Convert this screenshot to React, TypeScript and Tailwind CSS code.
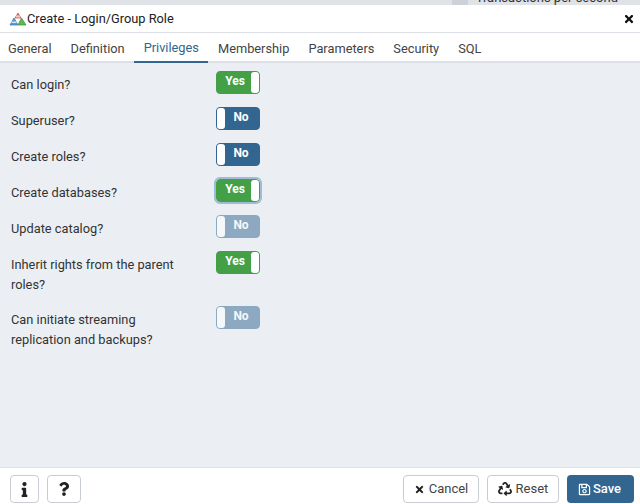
import { FaInfo, FaQuestion, FaRecycle, FaRegSave, FaTimes } from "react-icons/fa";

const tabs = ["General", "Definition", "Privileges", "Membership", "Parameters", "Security", "SQL"];

const rows = [
  { label: "Can login?", on: true },
  { label: "Superuser?", on: false },
  { label: "Create roles?", on: false },
  { label: "Create databases?", on: true, focus: true },
  { label: "Update catalog?", on: false, disabled: true },
  { label: "Inherit rights from the parent roles?", on: true, tall: true },
  { label: "Can initiate streaming replication and backups?", on: false, disabled: true, tall: true },
];

function Toggle({ on, disabled, focus }: { on: boolean; disabled?: boolean; focus?: boolean }) {
  const color = on ? "bg-[#43a047] border-[#43a047]" : "bg-[#326690] border-[#326690]";
  return (
    <div
      className={`flex h-[23px] w-[44px] items-center justify-between rounded border ${color} ${
        disabled ? "opacity-50" : ""
      } ${focus ? "outline-2 outline-[#9fbbd6]" : ""}`}
    >
      {!on && <span className="h-[21px] w-2 rounded-[3px] bg-white" />}
      <span className={`flex-1 pb-[3px] text-center text-xs font-bold text-white ${on ? "pl-[2px]" : "pr-[2px]"}`}>
        {on ? "Yes" : "No"}
      </span>
      {on && <span className="h-[21px] w-2 rounded-[3px] bg-white" />}
    </div>
  );
}

function Logo() {
  return (
    <svg width="18" height="14" viewBox="0 0 18 14">
      <path d="M9 1 L12 6 L6 6 Z" fill="#e57373" stroke="#c75b5b" strokeWidth="0.8" />
      <rect x="7" y="3.5" width="4" height="2" fill="#f4c7c3" />
      <path d="M5 6 L9 13 L1 13 Z" fill="#5c9bd1" stroke="#3f7fb5" strokeWidth="0.8" />
      <path d="M12.5 6 L17 13 L9 13 Z" fill="#5cb85c" stroke="#3d9a3d" strokeWidth="0.8" />
      <rect x="2.5" y="9.5" width="5" height="1.5" fill="#cfe3f5" />
    </svg>
  );
}

export default function App() {
  return (
    <div className="flex h-[504px] w-[640px] flex-col overflow-hidden bg-white font-['Roboto',sans-serif] text-[#222]">
      <div className="flex h-[5px] justify-end overflow-hidden bg-[#dfe2e7] pr-[22px]">
        <span className="mr-[8px] h-[5px] w-[16px] bg-[#cdd1d8]" />
        <span className="-mt-[12px] text-[13px] leading-5 text-[#333]">Transactions per second</span>
      </div>

      <div className="flex h-[28px] items-center justify-between border-b border-[#dde0e6] pl-[9px] pr-[5px]">
        <div className="flex items-center gap-0">
          <Logo />
          <span className="text-[12.8px] text-[#222]">Create - Login/Group Role</span>
        </div>
        <FaTimes className="size-[12px] text-[#111]" />
      </div>

      <div className="flex h-[30px] border-b-2 border-[#dde0e6] text-[#444]">
        {tabs.map((t, i) => (
          <div
            key={t}
            className={`flex h-[30px] items-center px-[9.5px] pt-px text-[12.8px] ${i === 0 ? "-ml-[1.5px]" : ""} ${
              t === "Privileges" ? "border-b-2 border-[#326690] text-[#326690]" : ""
            }`}
          >
            {t}
          </div>
        ))}
      </div>

      <div className="flex flex-1 flex-col bg-[#ebeff4] pl-[11px] pt-[8px]">
        {rows.map((r) => (
          <div key={r.label} className={`flex ${r.tall ? "h-[55px]" : "h-[36px]"}`}>
            <div className="w-[205px] pr-[21px] pt-[4px] text-[12.8px] leading-[19.5px] text-[#333]">{r.label}</div>
            <Toggle on={r.on} disabled={r.disabled} focus={r.focus} />
          </div>
        ))}
      </div>

      <div className="flex h-[37px] justify-between border-t border-[#dde0e6] pl-[10px] pr-[6px] pt-[7px]">
        <div className="flex gap-[8px]">
          <button className="flex h-[28px] w-[29px] items-center justify-center rounded border border-[#c8ccd3] bg-white">
            <FaInfo className="size-[15px] text-[#222]" />
          </button>
          <button className="flex h-[28px] w-[34px] items-center justify-center rounded border border-[#c8ccd3] bg-white">
            <FaQuestion className="size-[14px] text-[#222]" />
          </button>
        </div>
        <div className="flex gap-[8px] text-[13px]">
          <button className="flex h-[28px] w-[76px] items-center justify-center gap-1 rounded border border-[#c8ccd3] bg-white text-[#444]">
            <FaTimes className="size-[11px] text-[#222]" />
            Cancel
          </button>
          <button className="flex h-[28px] w-[72px] items-center justify-center gap-1 rounded border border-[#c8ccd3] bg-white text-[#444]">
            <FaRecycle className="size-[14px] text-[#222]" />
            Reset
          </button>
          <button className="flex h-[28px] w-[67px] items-center justify-center gap-[2px] rounded bg-[#326690] pr-[2px] font-medium text-white">
            <FaRegSave className="size-[13px] text-white" />
            Save
          </button>
        </div>
      </div>
    </div>
  );
}
